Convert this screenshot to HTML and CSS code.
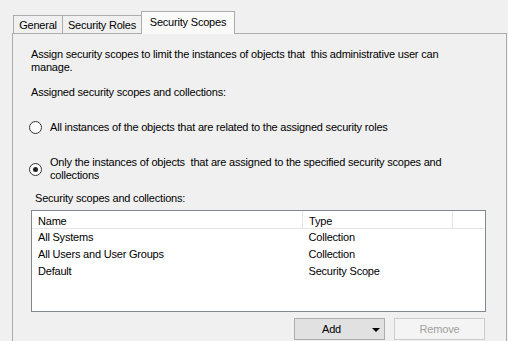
FILE: index.html
```html
<!DOCTYPE html>
<html lang="en">
<head>
    <meta charset="UTF-8">
    <title>Security Scopes</title>
    <link rel="stylesheet" href="styles.css">
</head>
<body>
    <!-- Tab strip -->
    <div class="tabs">
        <div class="tab tab-general">General</div>
        <div class="tab tab-roles">Security Roles</div>
        <div class="tab tab-active">Security Scopes</div>
    </div>

    <!-- Tab page -->
    <div class="panel">
        <p class="intro">Assign security scopes to limit the instances of objects that&nbsp; this administrative user can manage.</p>
        <p class="caption">Assigned security scopes and collections:</p>

        <label class="radio-row first">
            <span class="radio"></span>
            <span class="radio-text">All instances of the objects that are related to the assigned security roles</span>
        </label>
        <label class="radio-row second">
            <span class="radio checked"></span>
            <span class="radio-text">Only the instances of objects&nbsp; that are assigned to the specified security scopes and collections</span>
        </label>

        <p class="sub-caption">Security scopes and collections:</p>

        <div class="listbox">
            <table>
                <thead>
                    <tr>
                        <th class="col-name">Name</th>
                        <th class="col-type">Type</th>
                        <th class="col-fill"></th>
                    </tr>
                </thead>
                <tbody>
                    <tr><td>All Systems</td><td>Collection</td><td></td></tr>
                    <tr><td>All Users and User Groups</td><td>Collection</td><td></td></tr>
                    <tr><td>Default</td><td>Security Scope</td><td></td></tr>
                </tbody>
            </table>
        </div>

        <div class="buttons">
            <button class="btn btn-add"><span class="btn-label">Add</span><span class="arrow"></span></button>
            <button class="btn btn-remove" disabled>Remove</button>
        </div>
    </div>
</body>
</html>
```

FILE: styles.css
```css
/* Page */
body {
    margin: 0;
    background: #f0f0f0;
    font-family: 'Liberation Sans', Arial, sans-serif;
    font-size: 11px;
    line-height: 13px;
    letter-spacing: -0.2px;
    color: #000;
    overflow: hidden;
}

/* Tab strip */
.tabs {
    display: flex;
    align-items: flex-end;
    padding: 11px 0 0 13px;
}

.tab {
    box-sizing: border-box;
    height: 18px;
    padding-top: 3px;
    text-align: center;
    background: #f0f0f0;
    border: 1px solid #acacac;
    border-bottom: none;
}

.tab-general {
    width: 50px;
}

.tab-roles {
    width: 80px;
    margin-left: -1px;
}

.tab-active {
    position: relative;
    z-index: 1;
    width: 94px;
    height: 23px;
    margin-left: -1px;
    margin-bottom: -1px;
    padding-top: 4px;
    background: #fafafa;
}

/* Tab page */
.panel {
    box-sizing: border-box;
    width: 495px;
    height: 320px;
    margin-left: 12px;
    padding: 14px 20px 0 18px;
    border: 1px solid #acacac;
    background: #f0f0f0;
}

.intro {
    margin: 0;
    width: 440px;
}

.caption {
    margin: 12px 0 0;
}

/* Radio buttons */
.radio-row {
    display: flex;
    align-items: center;
    gap: 8px;
    margin-top: 22px;
    margin-left: -2px;
}

.radio {
    flex: none;
    box-sizing: border-box;
    width: 13px;
    height: 13px;
    border: 1px solid #333;
    border-radius: 50%;
    background: #fff;
    display: flex;
    align-items: center;
    justify-content: center;
}

.radio.checked::after {
    content: "";
    width: 5px;
    height: 5px;
    border-radius: 50%;
    background: #222;
}

.radio-row.second .radio-text {
    width: 400px;
}

.sub-caption {
    margin: 10px 0 0;
    padding-left: 4px;
}

/* List view */
.listbox {
    box-sizing: border-box;
    height: 102px;
    margin-top: 5px;
    border: 1px solid #828790;
    background: #fff;
}

table {
    width: 100%;
    border-collapse: collapse;
    table-layout: fixed;
}

th, td {
    padding: 0 0 0 6px;
    text-align: left;
    font-weight: normal;
    white-space: nowrap;
}

th {
    height: 13px;
    padding-top: 4px;
    border-bottom: 1px solid #e5e5e5;
    border-right: 1px solid #e5e5e5;
}

th.col-fill {
    border-right: none;
}

.col-name {
    width: 264px;
}

.col-type {
    width: 143px;
}

td {
    line-height: 17px;
}

/* Buttons */
.buttons {
    display: flex;
    justify-content: flex-end;
    gap: 9px;
    margin-top: 6px;
    padding-right: 1px;
}

.btn {
    box-sizing: border-box;
    width: 91px;
    height: 22px;
    padding: 0;
    font-family: inherit;
    font-size: 11px;
    letter-spacing: -0.2px;
}

.btn-add {
    display: flex;
    align-items: center;
    background: #e1e1e1;
    border: 1px solid #adadad;
    color: #000;
}

.btn-label {
    flex: 1;
    padding-right: 4px;
    text-align: center;
}

.arrow {
    width: 0;
    height: 0;
    margin: 1px 4px 0 0;
    border-left: 4px solid transparent;
    border-right: 4px solid transparent;
    border-top: 4px solid #000;
}

.btn-remove {
    background: #f4f4f4;
    border: 1px solid #cccccc;
    color: #a0a0a0;
}
```
